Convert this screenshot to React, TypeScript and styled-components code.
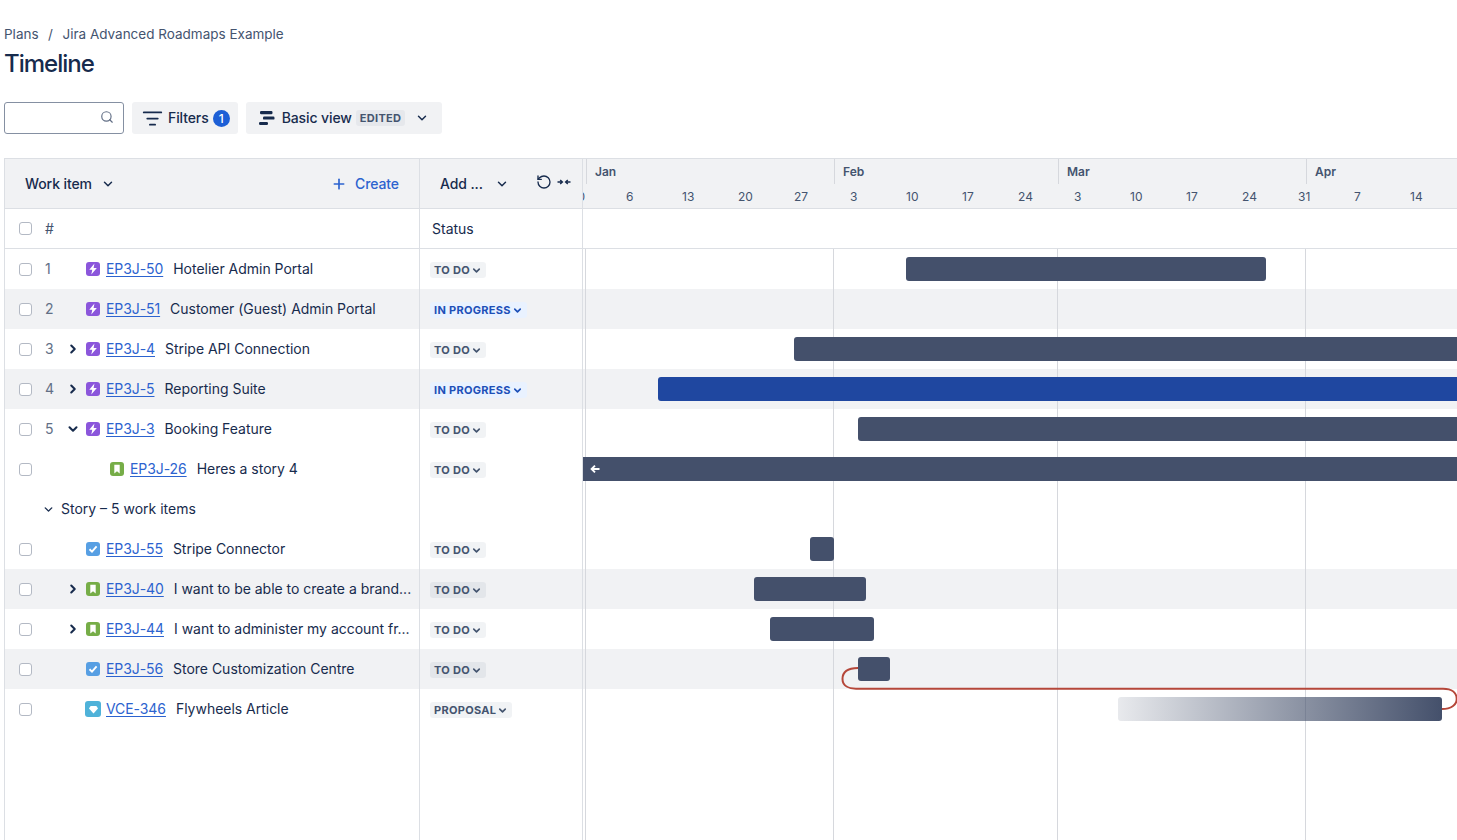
import React from "react";
import styled, { createGlobalStyle } from "styled-components";
import { ChevronDown, ChevronRight, ListFilter, Plus, RotateCcw, Search } from "lucide-react";

const Global = createGlobalStyle`
  html, body { margin: 0; padding: 0; height: 100%; overflow: hidden; background: #fff; }
  body { font-family: Inter, "Noto Sans", sans-serif; font-size: 14px; color: #172b4d; }
  #root { height: 100%; }
`;

const Page = styled.div`
  height: 840px;
  display: flex;
  flex-direction: column;
  padding-left: 4px;
  overflow: hidden;
`;
const Breadcrumbs = styled.nav`
  margin-top: 26px;
  height: 16px;
  line-height: 16px;
  display: flex;
  gap: 9.5px;
  font-size: 13.5px;
  color: #44546f;
`;
const Title = styled.h1`
  margin: 6px 0 0;
  height: 32px;
  line-height: 32px;
  font-size: 24px;
  font-weight: 500;
  letter-spacing: -1px;
  color: #172b4d;
`;
const Toolbar = styled.div`
  margin-top: 22px;
  display: flex;
  gap: 8px;
  height: 32px;
`;
const SearchBox = styled.div`
  width: 120px;
  box-sizing: border-box;
  border: 1px solid #8590a2;
  border-radius: 3px;
  display: flex;
  align-items: center;
  justify-content: flex-end;
  padding: 0 9px 2px 0;
  color: #626f86;
`;
const ToolButton = styled.button`
  border: 0;
  background: #f1f2f4;
  border-radius: 3px;
  height: 32px;
  padding: 0 8px 0 12px;
  display: flex;
  align-items: center;
  font: 500 14px/16px Inter, sans-serif;
  letter-spacing: -0.1px;
  color: #172b4d;
`;
const FilterIcon = styled(ListFilter)`
  margin: 0 5px 0 -2px;
`;
const MenuChevron = styled(ChevronDown)`
  margin-right: 5px;
`;
const CountBadge = styled.span`
  width: 17px;
  height: 17px;
  border-radius: 50%;
  background: #1d5fd6;
  color: #fff;
  font-size: 12px;
  line-height: 17px;
  text-align: center;
  margin-left: 4px;
`;
const EditedTag = styled.span`
  background: #e6e8ec;
  border-radius: 3px;
  font-size: 11px;
  font-weight: 700;
  letter-spacing: 0.3px;
  color: #44546f;
  padding: 1px 4px;
  margin: 0 10px 0 4px;
  line-height: 14px;
`;

const Table = styled.div`
  margin-top: 24px;
  flex: 1;
  min-height: 0;
  display: flex;
  flex-direction: column;
  width: 1500px;
  box-sizing: border-box;
  border-left: 1px solid #dcdfe4;
  border-top: 1px solid #dcdfe4;
`;
const HeadRow = styled.div`
  height: 50px;
  flex: none;
  box-sizing: border-box;
  display: flex;
  background: #f1f2f4;
  border-bottom: 1px solid #dcdfe4;
`;
const SubRow = styled.div`
  height: 40px;
  flex: none;
  box-sizing: border-box;
  display: flex;
  border-bottom: 1px solid #dcdfe4;
`;
const MainCell = styled.div`
  width: 415px;
  flex: none;
  box-sizing: border-box;
  border-right: 1px solid #dcdfe4;
  display: flex;
  align-items: center;
  min-width: 0;
`;
const FieldCell = styled.div`
  width: 163px;
  flex: none;
  box-sizing: border-box;
  border-right: 1px solid #dcdfe4;
  display: flex;
  align-items: center;
  padding-left: 12px;
`;
const ChartCell = styled.div`
  flex: 1;
  position: relative;
  min-width: 0;
`;
const HeadLabel = styled.span`
  margin-left: 20px;
  font-weight: 500;
  letter-spacing: -0.1px;
  color: #172b4d;
  display: flex;
  align-items: center;
  gap: 9px;
`;
const CreateLink = styled.span`
  margin-left: auto;
  margin-right: 20px;
  display: flex;
  align-items: center;
  gap: 8px;
  font-weight: 500;
  letter-spacing: -0.1px;
  color: #2c63cf;
`;
const AddLabel = styled.span`
  margin-left: 8px;
  font-weight: 500;
  letter-spacing: -0.1px;
  display: flex;
  align-items: center;
  gap: 12px;
`;
const HeadTools = styled.span`
  margin: -4px 0 0 27px;
  display: flex;
  align-items: center;
  gap: 5px;
  color: #172b4d;
`;
const TimeHead = styled.div`
  flex: 1;
  min-width: 0;
  overflow: hidden;
  display: flex;
  flex-direction: column;
`;
const Months = styled.div`
  height: 25px;
  display: flex;
  padding-left: 3px;
`;
const Month = styled.div<{ $w: number }>`
  width: ${(p) => p.$w}px;
  flex: none;
  box-sizing: border-box;
  border-left: 1px solid #d6d8dd;
  padding: 6px 0 0 8px;
  font-size: 12px;
  font-weight: 600;
  line-height: 14px;
  color: #44546f;
`;
const Weeks = styled.div`
  display: flex;
  margin-left: -13px;
  padding-top: 6px;
`;
const Week = styled.div`
  width: 56px;
  flex: none;
  font-size: 12px;
  line-height: 14px;
  color: #44546f;
`;
const Square = styled.span`
  width: 13px;
  height: 13px;
  flex: none;
  box-sizing: border-box;
  border: 1.5px solid #b3b9c4;
  border-radius: 3px;
  background: #fff;
  margin: 0 13.5px 0 13.5px;
`;
const Hash = styled.span`
  color: #44546f;
`;
const Body = styled.div`
  flex: 1;
  position: relative;
  min-height: 0;
  display: flex;
  flex-direction: column;
  line-height: 16px;
`;
const Row = styled.div<{ $shaded?: boolean }>`
  height: 40px;
  flex: none;
  display: flex;
  background: ${(p) => (p.$shaded ? "#f1f2f4" : "transparent")};
`;
const FillerRow = styled.div`
  flex: 1;
  display: flex;
`;
const Num = styled.span`
  width: 23px;
  flex: none;
  color: #626f86;
`;
const Expander = styled.span`
  width: 18px;
  flex: none;
  display: flex;
  color: #172b4d;
  margin-left: -2px;
  margin-right: 2px;
`;
const TypeBadge = styled.span<{ $bg: string; $indent?: boolean; $big?: boolean }>`
  width: ${(p) => (p.$big ? 16 : 14)}px;
  height: ${(p) => (p.$big ? 16 : 14)}px;
  margin-left: ${(p) => (p.$indent ? 24 : p.$big ? -1 : 0)}px;
  margin-right: ${(p) => (p.$big ? 5 : 6)}px;
  flex: none;
  border-radius: 3px;
  background: ${(p) => p.$bg};
  display: flex;
  align-items: center;
  justify-content: center;
`;
const KeyLink = styled.a`
  color: #2c63cf;
  text-decoration: underline;
  text-underline-offset: 2px;
  margin-right: 10px;
  letter-spacing: -0.08px;
  white-space: nowrap;
`;
const ItemTitle = styled.span`
  color: #172b4d;
  white-space: nowrap;
  letter-spacing: -0.02px;
`;
const GroupTitle = styled.span`
  display: flex;
  align-items: center;
  gap: 6px;
  margin-left: 37px;
  color: #172b4d;
`;
const Lozenge = styled.span<{ $tone: "grey" | "blue" }>`
  height: 16px;
  margin: 2px 0 0 -2px;
  display: inline-flex;
  align-items: center;
  gap: 1px;
  padding: 0 4px;
  border-radius: 3px;
  font-size: 11px;
  font-weight: 700;
  letter-spacing: 0.3px;
  background: ${(p) => (p.$tone === "blue" ? "#e9f2ff" : "rgba(9, 30, 66, 0.055)")};
  color: ${(p) => (p.$tone === "blue" ? "#1d50b8" : "#44546f")};
`;
const Bar = styled.div<{ $color?: string; $fade?: boolean; $flat?: boolean }>`
  position: absolute;
  top: 8px;
  height: 24px;
  z-index: 2;
  border-radius: ${(p) => (p.$flat ? 0 : 3)}px;
  background: ${(p) =>
    p.$fade
      ? "linear-gradient(to right, rgba(68,80,107,0.12), #44506b)"
      : p.$color ?? "#44506b"};
  display: flex;
  align-items: center;
  padding-left: 7px;
  box-sizing: border-box;
  color: #fff;
`;
const GridLine = styled.div`
  position: absolute;
  top: 0;
  bottom: 0;
  width: 1px;
  background: #d6d8dd;
  z-index: 1;
`;
const DependencyLine = styled.svg`
  position: absolute;
  left: 578px;
  top: 0;
  z-index: 3;
  pointer-events: none;
`;

const Bolt = () => (
  <svg width="12" height="12" viewBox="0 0 10 10"><path d="M6.2 0.4 1.9 5.7h2.5L3.6 9.6 8.2 4.1H5.5z" fill="#fff" /></svg>
);
const Mark = () => (
  <svg width="10" height="10" viewBox="0 0 10 10"><path d="M2.3 0.8h5.4v8.6L5 7.2 2.3 9.4z" fill="#fff" /></svg>
);
const Tick = () => (
  <svg width="10" height="10" viewBox="0 0 10 10"><path d="M1.5 5.2 4 7.6 8.6 2.4" fill="none" stroke="#fff" strokeWidth="1.9" /></svg>
);
const Gem = () => (
  <svg width="11" height="11" viewBox="0 0 11 11"><path d="M2.6 2h5.8l1.6 2.4L5.5 9.4 1 4.4z" fill="#fff" /></svg>
);
const ViewGlyph = styled.svg`
  margin-right: 6px;
`;
const ViewIcon = () => (
  <ViewGlyph width="18" height="16" viewBox="0 0 18 16">
    <rect x="2" y="1" width="12.5" height="3.2" rx="1.2" fill="#172b4d" />
    <rect x="5" y="6.6" width="11.5" height="3" rx="1.2" fill="#172b4d" />
    <rect x="1" y="12" width="9" height="3" rx="1.2" fill="#172b4d" />
  </ViewGlyph>
);
const Collapse = () => (
  <svg width="14" height="8" viewBox="0 0 14 8">
    <path d="M0.5 4H5M3.2 2 5.4 4 3.2 6M13.5 4H9M10.8 2 8.6 4 10.8 6" fill="none" stroke="#172b4d" strokeWidth="1.4" />
  </svg>
);
const LeftArrow = () => (
  <svg width="10" height="10" viewBox="0 0 10 10">
    <path d="M9.5 5H2M5 1.6 1.6 5 5 8.4" fill="none" stroke="#fff" strokeWidth="1.9" />
  </svg>
);

type Kind = "epic" | "story" | "task" | "idea";
const kinds: Record<Kind, { bg: string; icon: React.ReactNode; big?: boolean }> = {
  epic: { bg: "#8b56db", icon: <Bolt /> },
  story: { bg: "#76ad47", icon: <Mark /> },
  task: { bg: "#579fe3", icon: <Tick /> },
  idea: { bg: "#4fb2d9", icon: <Gem />, big: true },
};

type Item = {
  n?: number;
  kind: Kind;
  id: string;
  title: string;
  status: string;
  exp?: "right" | "down";
  indent?: boolean;
  shaded?: boolean;
  bar?: { x: number; w: number; color?: string; fade?: boolean; flat?: boolean; arrow?: boolean };
};

const first: Item[] = [
  { n: 1, kind: "epic", id: "EP3J-50", title: "Hotelier Admin Portal", status: "TO DO", bar: { x: 323, w: 360 } },
  { n: 2, kind: "epic", id: "EP3J-51", title: "Customer (Guest) Admin Portal", status: "IN PROGRESS", shaded: true },
  { n: 3, kind: "epic", id: "EP3J-4", title: "Stripe API Connection", status: "TO DO", exp: "right", bar: { x: 211, w: 900 } },
  { n: 4, kind: "epic", id: "EP3J-5", title: "Reporting Suite", status: "IN PROGRESS", exp: "right", shaded: true, bar: { x: 75, w: 1000, color: "#1f47a0" } },
  { n: 5, kind: "epic", id: "EP3J-3", title: "Booking Feature", status: "TO DO", exp: "down", bar: { x: 275, w: 900 } },
  { kind: "story", id: "EP3J-26", title: "Heres a story 4", status: "TO DO", indent: true, bar: { x: 0, w: 1000, flat: true, arrow: true } },
];
const second: Item[] = [
  { kind: "task", id: "EP3J-55", title: "Stripe Connector", status: "TO DO", bar: { x: 227, w: 24 } },
  { kind: "story", id: "EP3J-40", title: "I want to be able to create a brand...", status: "TO DO", exp: "right", shaded: true, bar: { x: 171, w: 112 } },
  { kind: "story", id: "EP3J-44", title: "I want to administer my account fr...", status: "TO DO", exp: "right", bar: { x: 187, w: 104 } },
  { kind: "task", id: "EP3J-56", title: "Store Customization Centre", status: "TO DO", shaded: true, bar: { x: 275, w: 32 } },
  { kind: "idea", id: "VCE-346", title: "Flywheels Article", status: "PROPOSAL", bar: { x: 535, w: 324, fade: true } },
];
const weeks = [30, 6, 13, 20, 27, 3, 10, 17, 24, 3, 10, 17, 24, 31, 7, 14];
const lines = [580, 828, 1052, 1300];

function ItemRow({ item }: { item: Item }) {
  const k = kinds[item.kind];
  return (
    <Row $shaded={item.shaded}>
      <MainCell>
        <Square />
        <Num>{item.n}</Num>
        <Expander>
          {item.exp === "right" && <ChevronRight size={14} strokeWidth={3.5} />}
          {item.exp === "down" && <ChevronDown size={14} strokeWidth={3.5} />}
        </Expander>
        <TypeBadge $bg={k.bg} $indent={item.indent} $big={k.big}>{k.icon}</TypeBadge>
        <KeyLink>{item.id}</KeyLink>
        <ItemTitle>{item.title}</ItemTitle>
      </MainCell>
      <FieldCell>
        <Lozenge $tone={item.status === "IN PROGRESS" ? "blue" : "grey"}>
          {item.status}
          <ChevronDown size={11} strokeWidth={3.5} />
        </Lozenge>
      </FieldCell>
      <ChartCell>
        {item.bar && (
          <Bar
            $color={item.bar.color}
            $fade={item.bar.fade}
            $flat={item.bar.flat}
            style={{ left: item.bar.x, width: item.bar.w }}
          >
            {item.bar.arrow && <LeftArrow />}
          </Bar>
        )}
      </ChartCell>
    </Row>
  );
}

export default function App() {
  return (
    <Page>
      <Global />
      <Breadcrumbs>
        <span>Plans</span>
        <span>/</span>
        <span>Jira Advanced Roadmaps Example</span>
      </Breadcrumbs>
      <Title>Timeline</Title>
      <Toolbar>
        <SearchBox><Search size={14} /></SearchBox>
        <ToolButton>
          <FilterIcon size={21} strokeWidth={2} />
          Filters
          <CountBadge>1</CountBadge>
        </ToolButton>
        <ToolButton>
          <ViewIcon />
          Basic view
          <EditedTag>EDITED</EditedTag>
          <MenuChevron size={14} strokeWidth={2.5} />
        </ToolButton>
      </Toolbar>
      <Table>
        <HeadRow>
          <MainCell>
            <HeadLabel>Work item <ChevronDown size={14} strokeWidth={2.5} /></HeadLabel>
            <CreateLink><Plus size={16} strokeWidth={2.5} />Create</CreateLink>
          </MainCell>
          <FieldCell>
            <AddLabel>Add ... <ChevronDown size={14} strokeWidth={2.5} /></AddLabel>
            <HeadTools><RotateCcw size={16} strokeWidth={2} /><Collapse /></HeadTools>
          </FieldCell>
          <TimeHead>
            <Months>
              <Month $w={248}>Jan</Month>
              <Month $w={224}>Feb</Month>
              <Month $w={248}>Mar</Month>
              <Month $w={200}>Apr</Month>
            </Months>
            <Weeks>
              {weeks.map((w, i) => <Week key={i}>{w}</Week>)}
            </Weeks>
          </TimeHead>
        </HeadRow>
        <SubRow>
          <MainCell>
            <Square />
            <Hash>#</Hash>
          </MainCell>
          <FieldCell>Status</FieldCell>
          <ChartCell />
        </SubRow>
        <Body>
          {first.map((item) => <ItemRow key={item.id} item={item} />)}
          <Row>
            <MainCell>
              <GroupTitle><ChevronDown size={13} strokeWidth={2.5} />Story – 5 work items</GroupTitle>
            </MainCell>
            <FieldCell />
            <ChartCell />
          </Row>
          {second.map((item) => <ItemRow key={item.id} item={item} />)}
          <FillerRow>
            <MainCell />
            <FieldCell />
            <ChartCell />
          </FillerRow>
          {lines.map((x) => <GridLine key={x} style={{ left: x }} />)}
          <DependencyLine width="900" height="500" viewBox="0 0 900 500">
            <path
              d="M275 419C268 419 259.5 421 259.5 430C259.5 437 266 439.7 273 439.7H860C869 439.7 873.7 444 873.7 450C873.7 456 868 460 859 460"
              fill="none"
              stroke="#b5473a"
              strokeWidth="2"
            />
          </DependencyLine>
        </Body>
      </Table>
    </Page>
  );
}
